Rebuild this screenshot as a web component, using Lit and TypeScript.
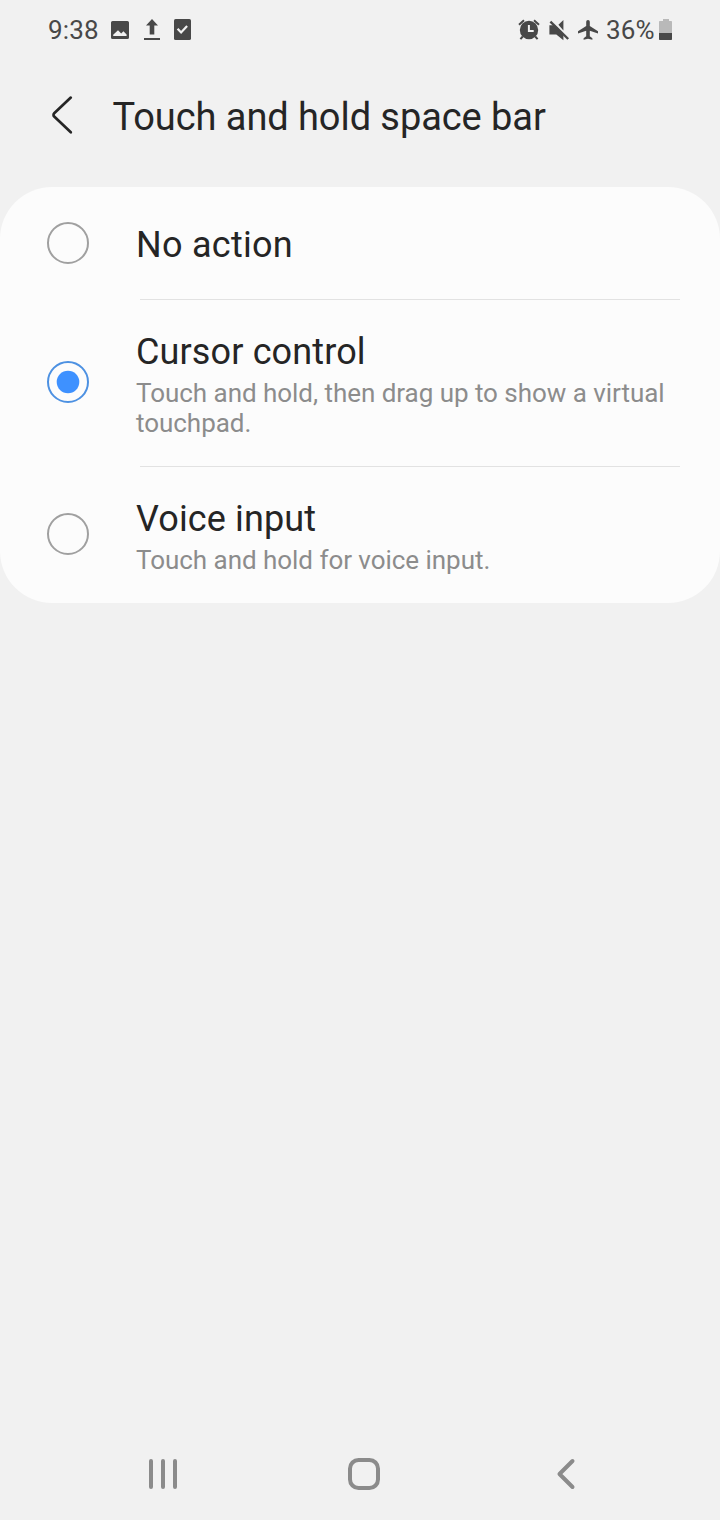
import { LitElement, html, css, svg, nothing } from "lit";
import { customElement, state } from "lit/decorators.js";

interface Option {
  title: string;
  summary?: string;
}

const OPTIONS: Option[] = [
  { title: "No action" },
  {
    title: "Cursor control",
    summary: "Touch and hold, then drag up to show a virtual touchpad.",
  },
  { title: "Voice input", summary: "Touch and hold for voice input." },
];

const imageIcon = svg`<path fill="#484848" fill-rule="evenodd" d="M1.6 0h14.8A1.6 1.6 0 0 1 18 1.6v14.8a1.6 1.6 0 0 1-1.6 1.6H1.6A1.6 1.6 0 0 1 0 16.4V1.6A1.6 1.6 0 0 1 1.6 0zM2.2 15h13.4v-1.6l-3.2-3.2-2.2 2.3L7 9.3l-4.8 4.5z"/>`;
const uploadIcon = svg`<path fill="#484848" d="M8 0l6 6.4H10.3V15.6H5.7V6.4H2zM0 19h16v2H0z"/>`;
const checkIcon = svg`<rect width="17" height="21" rx="1.6" fill="#484848"/><path d="M3.6 9.7l3.5 3.8 6-6.5" fill="none" stroke="#f2f2f2" stroke-width="2.2"/>`;
const alarmIcon = svg`<g fill="none" stroke="#484848" stroke-width="2"><path d="M1 5.8l5-4.6M16 1.2l5 4.6M4.8 17.5l-2.4 2.7M17.2 17.5l2.4 2.7"/></g><circle cx="11" cy="11" r="9.2" fill="#484848"/><path d="M10.9 6v6.1h4.8" fill="none" stroke="#f2f2f2" stroke-width="2"/>`;
const muteIcon = svg`<path fill="#484848" d="M0.4 5.2H6L14.4 13.4v6.8L7.3 14.4H0.4zM9.4 4.8L14.4 0v10.6z"/><path d="M1.4 1.6l17.8 17.4" stroke="#484848" stroke-width="2.4"/>`;
const planeIcon = svg`<path fill="#484848" d="M21 13.4v-2.1l-8.2-5.2V1.7a1.8 1.8 0 0 0-3.6 0v4.4L1 11.3v2.1l8.2-2.6v5.5l-2.6 2v1.5l4.4-1.1 4.4 1.1v-1.5l-2.6-2v-5.5z"/>`;
const batteryIcon = svg`<path fill="#b9b9b9" d="M4 0h6v2h2.2A.8.8 0 0 1 13 2.8V14H0V2.8A.8.8 0 0 1 .8 2H4z"/><path fill="#484848" d="M0 14h13v6.2a.8.8 0 0 1-.8.8H.8a.8.8 0 0 1-.8-.8z"/>`;

@customElement("app-root")
export class AppRoot extends LitElement {
  @state() private selected = 1;

  static styles = css`
    :host {
      display: flex;
      flex-direction: column;
      box-sizing: border-box;
      width: 100%;
      height: 1520px;
      background: #f1f1f1;
      color: #252525;
      font-family: Roboto, sans-serif;
      overflow: hidden;
    }
    svg {
      display: block;
      flex: none;
      overflow: visible;
    }
    .status {
      display: flex;
      align-items: center;
      justify-content: space-between;
      height: 60px;
      padding: 0 47px 0 48px;
      box-sizing: border-box;
      color: #484848;
      font-size: 26px;
      line-height: 60px;
    }
    .group {
      display: flex;
      align-items: center;
    }
    .group svg {
      margin-bottom: 1px;
    }
    .clock {
      width: 63px;
      letter-spacing: 0.2px;
    }
    .group .upload {
      margin-left: 15px;
      margin-right: 14px;
    }
    .group .mute {
      margin-left: 9px;
      margin-right: 8px;
    }
    .percent {
      width: 53px;
      margin-left: 7px;
      white-space: nowrap;
      letter-spacing: 0.2px;
    }
    .header {
      display: flex;
      align-items: center;
      height: 127px;
      padding: 0 0 17px 50px;
      box-sizing: border-box;
    }
    .heading {
      margin: 0 0 0 40.5px;
      font-size: 38px;
      font-weight: 400;
      line-height: 44px;
      padding-top: 4px;
      letter-spacing: -0.07px;
    }
    .card {
      display: flex;
      flex-direction: column;
      background: #fcfcfc;
      border-radius: 52px;
      overflow: hidden;
    }
    .row {
      display: grid;
      grid-template-columns: 42px 1fr;
      column-gap: 47px;
      align-items: center;
      padding: 31px 47px 28px;
      cursor: pointer;
    }
    .row.single {
      padding: 37px 47px 32px;
    }
    .radio {
      margin-top: -6px;
    }
    .single .radio {
      margin-top: -5px;
    }
    .title {
      font-size: 36px;
      line-height: 43px;
      letter-spacing: 0.13px;
    }
    .single .title {
      letter-spacing: 0.28px;
    }
    .summary {
      font-size: 26px;
      line-height: 30px;
      padding-top: 4px;
      color: #8c8c8c;
      letter-spacing: -0.04px;
    }
    .divider {
      height: 1px;
      margin: 0 40px 0 140px;
      background: #e2e2e2;
    }
    .nav {
      display: flex;
      align-items: center;
      margin-top: auto;
      height: 92px;
      padding-left: 149px;
    }
    .home {
      margin: 0 176.5px 0 171px;
    }
  `;

  private radio(on: boolean) {
    return html`<svg class="radio" width="42" height="42" viewBox="0 0 42 42">
      <circle cx="21" cy="21" r="20" fill="none" stroke=${on ? "#4d91e2" : "#a0a0a0"} stroke-width="2" />
      ${on ? svg`<circle cx="21" cy="21" r="11.3" fill="#3e91ff"/>` : nothing}
    </svg>`;
  }

  render() {
    return html`
      <div class="status">
        <div class="group">
          <span class="clock">9:38</span>
          <svg width="18" height="18">${imageIcon}</svg>
          <svg class="upload" width="16" height="21">${uploadIcon}</svg>
          <svg width="17" height="21">${checkIcon}</svg>
        </div>
        <div class="group">
          <svg width="22" height="21">${alarmIcon}</svg>
          <svg class="mute" width="20" height="20">${muteIcon}</svg>
          <svg width="22" height="20">${planeIcon}</svg>
          <span class="percent">36%</span>
          <svg width="14" height="21">${batteryIcon}</svg>
        </div>
      </div>
      <div class="header">
        <svg width="22" height="38" viewBox="0 0 22 38">
          <path d="M20.8 1.6L4.2 17.3a2.2 2.2 0 0 0 0 3.2L20.8 36.2" fill="none" stroke="#252525" stroke-width="2.7" stroke-linecap="round" />
        </svg>
        <h1 class="heading">Touch and hold space bar</h1>
      </div>
      <div class="card">
        ${OPTIONS.map(
          (o, i) => html`
            ${i ? html`<div class="divider"></div>` : nothing}
            <div class="row ${o.summary ? "" : "single"}" @click=${() => (this.selected = i)}>
              ${this.radio(i === this.selected)}
              <div>
                <div class="title">${o.title}</div>
                ${o.summary ? html`<div class="summary">${o.summary}</div>` : nothing}
              </div>
            </div>
          `
        )}
      </div>
      <div class="nav">
        <svg width="28" height="30">
          <path d="M2 2v26M14 2v26M26 2v26" stroke="#8b8b8b" stroke-width="4" stroke-linecap="round" />
        </svg>
        <svg class="home" width="32" height="32">
          <rect x="2" y="2" width="28" height="28" rx="8.5" fill="none" stroke="#8b8b8b" stroke-width="4" />
        </svg>
        <svg width="18" height="30">
          <path d="M15.5 2L2.5 15l13 13" fill="none" stroke="#8b8b8b" stroke-width="4" stroke-linecap="round" stroke-linejoin="round" />
        </svg>
      </div>
    `;
  }
}
